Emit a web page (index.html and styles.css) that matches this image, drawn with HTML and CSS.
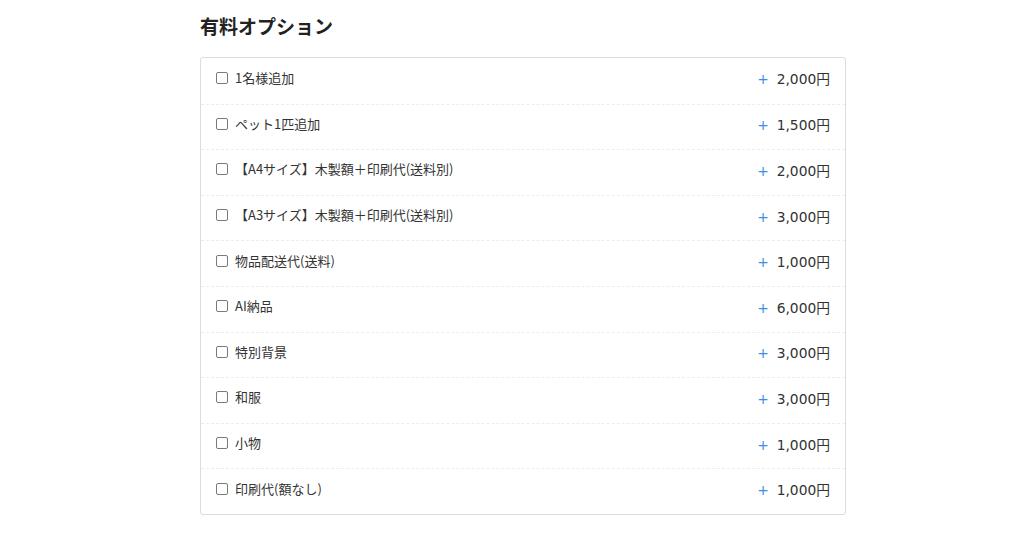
FILE: index.html
```html
<!DOCTYPE html>
<html lang="ja">
<head>
<meta charset="utf-8">
<link rel="stylesheet" href="styles.css">
</head>
<body>
<main class="wrap">
  <h2 class="title">有料オプション</h2>
  <ul class="options">
    <li class="row"><label class="opt"><span class="box"></span><span class="name">1名様追加</span></label><span class="price"><span class="plus">+</span>2,000円</span></li>
    <li class="row"><label class="opt"><span class="box"></span><span class="name">ペット1匹追加</span></label><span class="price"><span class="plus">+</span>1,500円</span></li>
    <li class="row"><label class="opt"><span class="box"></span><span class="name">【A4サイズ】木製額＋印刷代(送料別)</span></label><span class="price"><span class="plus">+</span>2,000円</span></li>
    <li class="row"><label class="opt"><span class="box"></span><span class="name">【A3サイズ】木製額＋印刷代(送料別)</span></label><span class="price"><span class="plus">+</span>3,000円</span></li>
    <li class="row"><label class="opt"><span class="box"></span><span class="name">物品配送代(送料)</span></label><span class="price"><span class="plus">+</span>1,000円</span></li>
    <li class="row"><label class="opt"><span class="box"></span><span class="name">AI納品</span></label><span class="price"><span class="plus">+</span>6,000円</span></li>
    <li class="row"><label class="opt"><span class="box"></span><span class="name">特別背景</span></label><span class="price"><span class="plus">+</span>3,000円</span></li>
    <li class="row"><label class="opt"><span class="box"></span><span class="name">和服</span></label><span class="price"><span class="plus">+</span>3,000円</span></li>
    <li class="row"><label class="opt"><span class="box"></span><span class="name">小物</span></label><span class="price"><span class="plus">+</span>1,000円</span></li>
    <li class="row"><label class="opt"><span class="box"></span><span class="name">印刷代(額なし)</span></label><span class="price"><span class="plus">+</span>1,000円</span></li>
  </ul>
</main>
</body>
</html>
```
FILE: styles.css
```css
html, body {
  margin: 0;
  padding: 0;
  background: #fff;
}
body {
  font-family: "Noto Sans CJK JP", "Noto Sans", sans-serif;
  color: #333;
}
.wrap {
  width: 646px;
  margin: 0 0 0 200px;
  padding-top: 12px;
}
.title {
  margin: 0 0 17px;
  font-size: 19px;
  line-height: 28px;
  font-weight: bold;
  color: #222;
}
.options {
  list-style: none;
  margin: 0;
  padding: 0;
  border: 1px solid #dcdcdc;
  border-radius: 3px;
}
.row {
  box-sizing: border-box;
  height: 45.6px;
  display: flex;
  align-items: center;
  justify-content: space-between;
  padding: 0 15px 0 15px;
}
.row + .row {
  border-top: 1px dashed #ededed;
}
.opt {
  display: flex;
  align-items: center;
  gap: 7px;
  margin-bottom: 6px;
  font-size: 13px;
  line-height: 20px;
  color: #333;
}
.box {
  box-sizing: border-box;
  width: 12px;
  height: 12px;
  border: 1.5px solid #7a7a7a;
  border-radius: 2px;
  background: #fff;
}
.price {
  font-family: "DejaVu Sans", "Noto Sans CJK JP", sans-serif;
  font-size: 13.8px;
  line-height: 20px;
  margin-bottom: 3px;
  color: #333;
}
.plus {
  color: #3a8ee6;
  margin-right: 8px;
}
```
